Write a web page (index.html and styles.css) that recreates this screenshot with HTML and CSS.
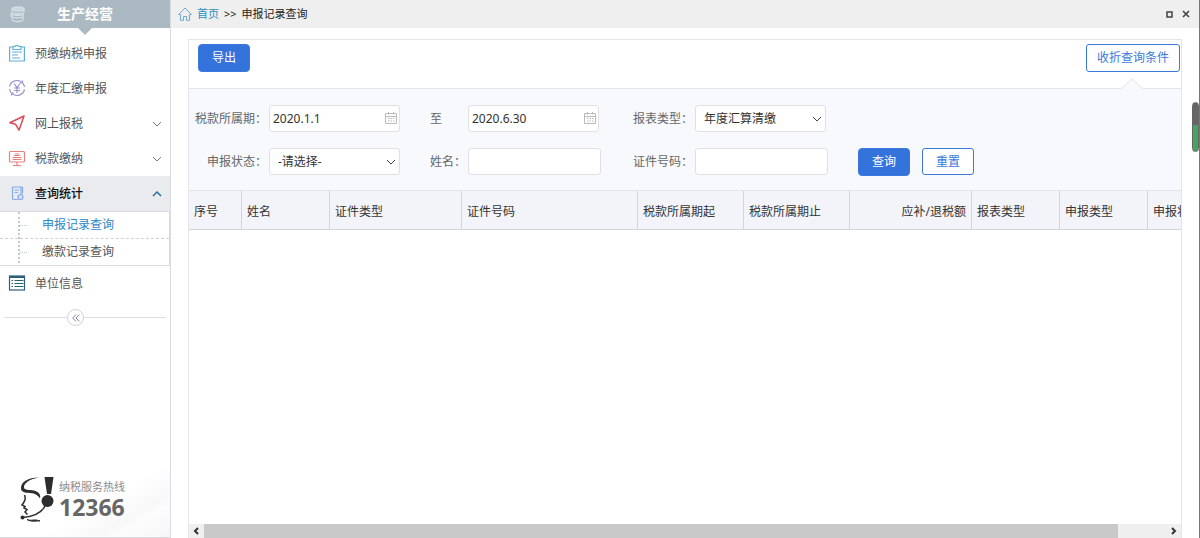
FILE: index.html
```html
<!DOCTYPE html>
<html lang="zh-CN">
<head>
  <meta charset="UTF-8">
  <meta name="viewport" content="width=device-width, initial-scale=1.0">
  <title>申报记录查询</title>
  <link rel="stylesheet" href="styles.css">
</head>
<body>
  <aside class="sidebar">
    <div class="side-title">
      <svg class="coins" width="18" height="18" viewBox="0 0 18 18" fill="none" stroke="#d3e0e6" stroke-width="1.3">
        <ellipse cx="10" cy="4" rx="6" ry="2" fill="#c9d6dd"/>
        <path d="M4 4v2.500c0 3 12 3 12 0V4M3 8c0 3 11 3 12 1M3 8v2.500c0 3 11 3 12 1V9M4 12.500v2c1 2.700 10 2.700 11 0v-2"/>
      </svg>
      <span>生产经营</span>
    </div>
    <nav class="menu">
      <a href="#" class="item">
        <svg width="18" height="18" viewBox="0 0 18 18" fill="none" stroke="#5cb0de" stroke-width="1.200">
          <path d="M5 2H1.600v14h14.800V2H13"/><path d="M5 1.500h2L8 .600h2l1 .900h2v3H5z"/><path d="M4 7h10M4 10h6M4 13h8"/>
        </svg>
        <span>预缴纳税申报</span>
      </a>
      <a href="#" class="item">
        <svg width="18" height="18" viewBox="0 0 18 18" fill="none" stroke="#9a95cf" stroke-width="1.200">
          <path d="M1.500 6.500A7.600 7.600 0 0 1 14 2.500M16.500 9.500A7.600 7.600 0 0 1 4 13.500"/><path d="M1.500 9a7 7 0 0 0 1.500 3.500M16.500 7A7 7 0 0 0 15 3.500"/>
          <path d="M14.500.500V3H12M3.500 15.500V13H6"/><path d="M6 3.500l3 4.200 3-4.200M9 7.700V13M6 8h6M6 10.500h6"/>
        </svg>
        <span>年度汇缴申报</span>
      </a>
      <a href="#" class="item">
        <svg width="18" height="18" viewBox="0 0 18 18" fill="none" stroke="#dc4a55" stroke-width="1.500" stroke-linejoin="round">
          <path d="M16 1L1.800 7.800l5.700 1.400 3.500 6z"/>
        </svg>
        <span>网上报税</span>
        <svg class="arrow" width="10" height="6" viewBox="0 0 10 6"><path d="M1 1l4 4 4-4"/></svg>
      </a>
      <a href="#" class="item">
        <svg width="18" height="18" viewBox="0 0 18 18" fill="none" stroke="#e8827f" stroke-width="1.200">
          <rect x="1.500" y="1.500" width="15" height="10.500" rx="1"/><path d="M9 12v3.500M5 15.500h8M4.500 7.500h9M4.500 9.500h9M6 5.500h6M7 4h4"/>
        </svg>
        <span>税款缴纳</span>
        <svg class="arrow" width="10" height="6" viewBox="0 0 10 6"><path d="M1 1l4 4 4-4"/></svg>
      </a>
      <a href="#" class="item open">
        <svg width="18" height="18" viewBox="0 0 18 18" fill="none" stroke="#86a9f0" stroke-width="1.200">
          <path d="M14.500 8.500V3a1 1 0 0 0-1-1h-8a1 1 0 0 0-1 1v10.500a1 1 0 0 0 1 1H10"/><path d="M13 2v7.500M6.500 5h4.500M6.500 7.500H10"/><circle cx="12.500" cy="12" r="2.500" fill="#d4e2fb"/>
        </svg>
        <span>查询统计</span>
        <svg class="arrow" width="10" height="6" viewBox="0 0 10 6"><path d="M1 5l4-4 4 4"/></svg>
      </a>
      <ul class="submenu">
        <li><a href="#" class="current">申报记录查询</a></li>
        <li><a href="#">缴款记录查询</a></li>
      </ul>
      <a href="#" class="item">
        <svg width="18" height="18" viewBox="0 0 18 18" fill="none" stroke="#2e5f78" stroke-width="1.200">
          <rect x="1.500" y="1" width="15" height="14"/><path d="M1.500 2h15" stroke-width="2"/><path d="M6.500 5.500h9M6.500 8.500h9M6.500 11.500h9"/><path d="M3.500 5.500H5M3.500 8.500H5M3.500 11.500H5"/>
        </svg>
        <span>单位信息</span>
      </a>
    </nav>
    <div class="fold">
      <button type="button" aria-label="收起菜单">
        <svg width="8" height="8" viewBox="0 0 8 8" fill="none" stroke="#7d83a8"><path d="M4 .500L.700 4 4 7.500M7.300.500L4 4l3.300 3.500"/></svg>
      </button>
    </div>
    <div class="hotline">
      <svg width="34" height="46" viewBox="0 0 34 46">
        <path d="M19 1.500C8 1.500 1 6 1 12c0 3.500 2.500 4.500 7 4.800 6 .200 9.500 1.700 12 5.700 1.500-5-3-8-10-8.500-4-.200-6-.700-6-3C4 7 10 3 19 1.500z" fill="#2d2d2d"/>
        <path d="M24.500 1h9l-2.500 17h-4z" fill="#2d2d2d"/>
        <circle cx="27.500" cy="25" r="6" fill="#2d2d2d"/>
        <path d="M25.500 29C22 37 14 40.500 3 41.500" fill="none" stroke="#2d2d2d" stroke-width="1.500"/>
        <path d="M4.500 19c1.500 4 .500 6-2.500 10l3 1.500-1 1.500 3 1.500L5 36l2.500 2.500" fill="none" stroke="#2d2d2d" stroke-width="1.500"/>
        <circle cx="2.500" cy="41.500" r="2" fill="#2d2d2d"/>
        <path d="M7 43.500c4 2 7-1 13 1.500-5-.500-8 1.500-13-1.500z" fill="#2d2d2d" stroke="#2d2d2d"/>
      </svg>
      <div>
        <p>纳税服务热线</p>
        <strong>12366</strong>
      </div>
    </div>
  </aside>

  <main class="main">
    <header class="crumbs">
      <svg width="14" height="14" viewBox="0 0 14 14" fill="none" stroke="#6fa9cf"><path d="M.700 7.500L7 1l6.300 6.500H11.500v5.800H8.500V9.500h-3v3.800h-3V7.500z"/></svg>
      <a href="#">首页</a>
      <span>&gt;&gt;</span>
      <span>申报记录查询</span>
      <div class="win">
        <button type="button" aria-label="最大化"><svg width="7" height="7" viewBox="0 0 7 7" fill="none" stroke="#444" stroke-width="1.500"><rect x="1" y="1" width="5" height="5"/></svg></button>
        <button type="button" aria-label="关闭"><svg width="8" height="8" viewBox="0 0 8 8" fill="none" stroke="#444" stroke-width="1.600"><path d="M1 1l6 6M7 1L1 7"/></svg></button>
      </div>
    </header>

    <section class="panel">
      <div class="toolbar">
        <button type="button" class="btn primary">导出</button>
        <button type="button" class="btn toggle">收折查询条件</button>
        <svg class="notch" width="24" height="11" viewBox="0 0 24 11"><path d="M0 10.500h1L12 1l11 9.500h1V11H0z" fill="#f8f9fd"/><path d="M0 10.500h1.500L12 1l10.500 9.500H24" fill="none" stroke="#e3e5ea"/></svg>
      </div>

      <form class="filters">
        <label for="from">税款所属期：</label>
        <div class="field">
          <input type="text" id="from" value="2020.1.1">
          <svg class="cal" width="12" height="12" viewBox="0 0 12 12"><path d="M.500 1.500h11v10H.500zM.500 4.500h11M3.500 0v2.500M8.500 0v2.500M3 6.500h1.500M5.500 6.500H7M8 6.500h1.500M3 9h1.500M5.500 9H7M8 9h1.500"/></svg>
        </div>
        <label for="to" class="left">至</label>
        <div class="field">
          <input type="text" id="to" value="2020.6.30">
          <svg class="cal" width="12" height="12" viewBox="0 0 12 12"><path d="M.500 1.500h11v10H.500zM.500 4.500h11M3.500 0v2.500M8.500 0v2.500M3 6.500h1.500M5.500 6.500H7M8 6.500h1.500M3 9h1.500M5.500 9H7M8 9h1.500"/></svg>
        </div>
        <label for="kind">报表类型：</label>
        <div class="field">
          <select id="kind"><option>年度汇算清缴</option></select>
          <svg class="caret" width="10" height="6" viewBox="0 0 10 6"><path d="M1 1l4 4 4-4"/></svg>
        </div>

        <label for="state" class="row2">申报状态：</label>
        <div class="field">
          <select id="state"><option>-请选择-</option></select>
          <svg class="caret" width="10" height="6" viewBox="0 0 10 6"><path d="M1 1l4 4 4-4"/></svg>
        </div>
        <label for="name" class="left">姓名：</label>
        <div class="field wide"><input type="text" id="name"></div>
        <label for="idno">证件号码：</label>
        <div class="field wide"><input type="text" id="idno"></div>
        <div class="actions">
          <button type="button" class="btn primary">查询</button>
          <button type="reset" class="btn">重置</button>
        </div>
      </form>

      <div class="grid">
        <table>
          <colgroup>
            <col class="w-no"><col class="w-s"><col class="w-m"><col class="w-l"><col class="w-date"><col class="w-date"><col class="w-sum"><col class="w-s"><col class="w-s"><col class="w-m">
          </colgroup>
          <thead>
            <tr>
              <th>序号</th><th>姓名</th><th>证件类型</th><th>证件号码</th><th>税款所属期起</th><th>税款所属期止</th><th class="num">应补/退税额</th><th>报表类型</th><th>申报类型</th><th>申报状态</th>
            </tr>
          </thead>
        </table>
      </div>

      <div class="hscroll">
        <svg width="15" height="14" viewBox="0 0 15 14"><path d="M9 4L6 7l3 3"/></svg>
        <div class="track"><div class="thumb"></div></div>
        <svg width="15" height="14" viewBox="0 0 15 14"><path d="M6 4l3 3-3 3"/></svg>
      </div>
    </section>
    <div class="vthumb"></div>
  </main>
</body>
</html>
```

FILE: styles.css
```css
* {box-sizing: border-box;}
body {margin: 0; height: 100vh; display: flex; overflow: hidden; background: #fff; color: #333; font-family: "Noto Sans", "Noto Sans CJK SC", sans-serif; font-size: 12px; line-height: 18px;}
a {color: inherit; text-decoration: none;}
button, input, select {font: inherit; color: inherit;}

/* Sidebar */
.sidebar {width: 171px; flex: none; display: flex; flex-direction: column; border-right: 1px solid #d9dbde;}
.side-title {position: relative; height: 28px; flex: none; display: flex; align-items: center; padding-left: 8px; gap: 31px; background: #abb9c2; color: #fff; font-size: 14px; font-weight: bold;}
.side-title::after {content: ""; position: absolute; left: 78px; top: 28px; border: 7px solid transparent; border-top-color: #abb9c2; border-bottom: 0;}
.menu {padding-top: 8px;}
.item {display: flex; align-items: center; height: 35px; padding: 0 8px; gap: 9px; color: #555;}
.arrow {margin-left: auto; fill: none; stroke: #777;}
.item.open {background: #e9ebee; color: #111; font-weight: 500;}
.item.open .arrow {stroke: #2f6ea5; stroke-width: 1.5;}
.submenu {position: relative; list-style: none; margin: 0; padding: 0; border: 1px solid #d9dbde; border-left: 0; color: #555;}
.submenu::before {content: ""; position: absolute; left: 18px; top: 0; bottom: 2px; border-left: 2px dotted #bcc8d2;}
.submenu li {display: flex; align-items: center; height: 26px;}
.submenu li::before {content: ""; width: 7px; margin-left: 20px; border-top: 1px dotted #bcc8d2;}
.submenu li + li {height: 27px; border-top: 1px dashed #ccd2d8;}
.submenu a {padding-left: 15px;}
.submenu .current {color: #2e86c9;}
.fold {display: flex; align-items: center; height: 17px; margin: 8px 4px 0;}
.fold::before {content: ""; width: 63px; border-top: 1px solid #dcdfe2;}
.fold::after {content: ""; flex: 1; border-top: 1px solid #dcdfe2;}
.fold button {display: flex; align-items: center; justify-content: center; width: 17px; height: 17px; padding: 0; border: 1px solid #cfcfdc; border-radius: 50%; background: #fff;}
.hotline {display: flex; align-items: flex-start; gap: 5px; height: 70px; margin-top: auto; padding: 8px 0 0 20px; border-bottom: 1px solid #d9dbde; background: linear-gradient(150deg, #fff 55%, #f8f8f8 75%, #fcfcfc 80%, #f7f7f7);}
.hotline p {margin: 3px 0 0; color: #8c8c8c; font-size: 11px; line-height: 16px;}
.hotline strong {display: block; color: #666; font-size: 23px; line-height: 24px;}

/* Main area */
.main {position: relative; flex: 1; min-width: 0; display: flex; flex-direction: column; border-right: 1px solid #777;}
.crumbs {display: flex; align-items: center; height: 28px; flex: none; padding: 0 9px 0 7px; gap: 5px; background: #efefef; color: #222; font-size: 11px;}
.crumbs a {color: #2b8ec2;}
.win {display: flex; gap: 9px; margin-left: auto;}
.win button {display: flex; align-items: center; padding: 0; border: 0; background: none;}
.panel {flex: 1; min-height: 0; display: flex; flex-direction: column; margin: 11px 17px 0; border: 1px solid #e3e5ea; border-bottom: 0;}
.toolbar {position: relative; display: flex; justify-content: space-between; align-items: flex-start; height: 49px; flex: none; padding: 4px 1px 0 9px; border-bottom: 1px solid #e3e5ea;}
.btn {height: 27px; padding: 0 13px; border: 1px solid #3a78dc; border-radius: 3px; background: #fff; color: #3a78dc; line-height: 18px;}
.btn.primary {height: 28px; border-radius: 4px; background: #3573dc; color: #fff;}
.btn.toggle {height: 28px; padding: 0 10px;}
.notch {position: absolute; right: 37px; bottom: -1px;}

.filters {display: grid; grid-template-columns: 78px 131px 64px 133px 90px 133px auto; grid-auto-rows: 27px; column-gap: 2px; row-gap: 16px; align-items: center; flex: none; height: 102px; padding: 16px 0 0; background: #f8f9fd; color: #666; border-bottom: 1px solid #e3e5ea;}
.filters label {text-align: right; white-space: nowrap;}
.filters .left {text-align: left; padding-left: 28px;}
.field {position: relative; width: 131px;}
.field.wide {width: 133px;}
.field input, .field select {display: block; width: 100%; height: 27px; padding: 0 3px; border: 1px solid #dfe1e6; border-radius: 3px; background: #fff; color: #333; outline: none;}
.field select {appearance: none; padding: 0 8px;}
.cal {position: absolute; right: 3px; top: 7px; fill: none; stroke: #bbb;}
.caret {position: absolute; right: 4px; top: 11px; fill: none; stroke: #444;}
.filters .row2 {grid-column: 1;}
.actions {display: flex; align-items: center; gap: 12px; padding-left: 28px;}

/* Records */
.grid {flex: 1; overflow: hidden;}
table {table-layout: fixed; width: 1091px; border-collapse: separate; border-spacing: 0;}
th {height: 39px; padding: 3px 5px 0; border-right: 1px solid #d3d5dc; border-bottom: 1px solid #d3d5dc; background: #f3f4f9; font-weight: normal; text-align: left; white-space: nowrap; overflow: hidden;}
th.num {text-align: right;}
.w-no {width: 53px;}
.w-s {width: 88px;}
.w-m {width: 132px;}
.w-l {width: 176px;}
.w-date {width: 106px;}
.w-sum {width: 122px;}

.hscroll {display: flex; height: 14px; flex: none; background: #efefef;}
.hscroll svg {fill: none; stroke: #333; stroke-width: 2;}
.track {flex: 1;}
.thumb {width: 95%; height: 14px; background: #c9c9c9;}
.vthumb {position: absolute; right: 0; top: 102px; width: 7px; height: 50px; border: 1px solid #666; border-radius: 4px; background: linear-gradient(#666 45%, #42a562 45%);}
```
